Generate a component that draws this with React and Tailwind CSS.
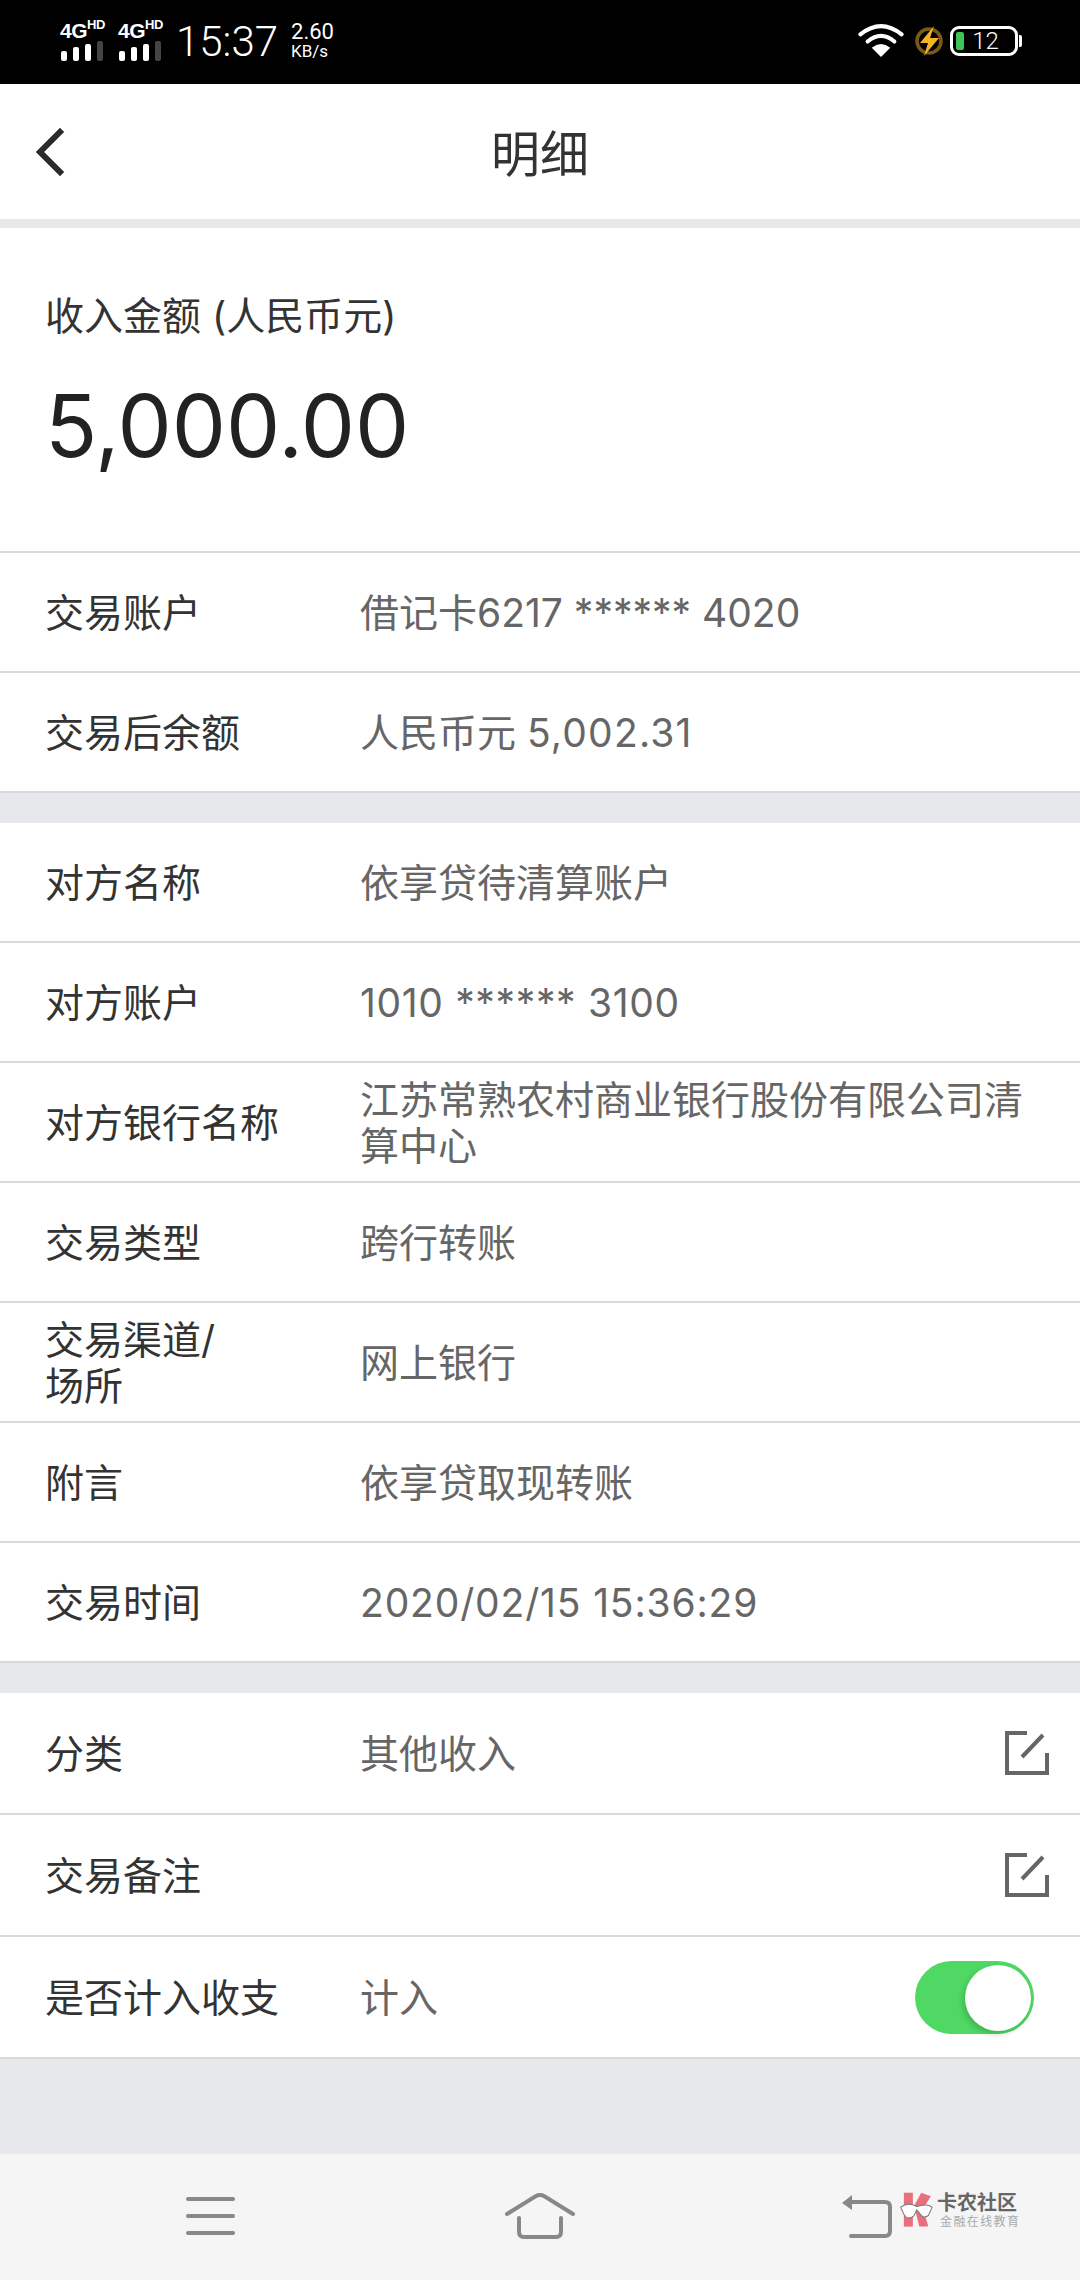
const F = { fontFamily: 'Inter,"Noto Sans CJK SC",sans-serif' };

function Signal() {
  return (
    <div className="flex flex-col w-[46px] text-white">
      <div className="flex items-start h-[24px] font-bold" style={{ fontFamily: '"Liberation Sans",sans-serif' }}>
        <span className="text-[21px] leading-[20px] tracking-[-0.5px] mt-[3px]">4G</span>
        <span className="text-[13px] leading-[12px] tracking-[-0.3px] mt-[1px]">HD</span>
      </div>
      <div className="flex gap-[6px] items-end h-[20px] ml-[1px] -mt-[1px]">
        <div className="w-[6px] h-[10px] bg-white rounded-[2px]" />
        <div className="w-[6px] h-[14px] bg-white rounded-[2px]" />
        <div className="w-[6px] h-[17px] bg-white rounded-[2px]" />
        <div className="w-[6px] h-[20px] bg-[#444] rounded-[2px]" />
      </div>
    </div>
  );
}

function StatusBar() {
  return (
    <div className="h-[84px] bg-black flex items-center text-white relative" style={{ fontFamily: 'Roboto,sans-serif' }}>
      <div className="flex items-center ml-[60px] gap-[12px] -mt-[6px]">
        <Signal />
        <Signal />
      </div>
      <span className="ml-[12px] text-[42px] leading-none font-light">15:37</span>
      <div className="ml-[13px] flex flex-col -mt-[3px]">
        <span className="text-[22px] leading-[21px]">2.60</span>
        <span className="text-[17px] leading-[18px]">KB/s</span>
      </div>
      <div className="ml-auto mr-[58px] flex items-center -mt-[3px]">
        <svg width="48" height="35" viewBox="0 0 46 34" fill="none" stroke="#fff" strokeWidth="4" strokeLinecap="round">
          <path d="M3 11 Q23 -5 43 11" />
          <path d="M10 18 Q23 7 36 18" />
          <path d="M23 33 L14 24 Q23 17 32 24 Z" fill="#fff" stroke="none" />
        </svg>
        <svg className="ml-[9px]" width="30" height="32" viewBox="0 0 30 32" fill="none">
          <circle cx="15" cy="16" r="12" stroke="#7a5a14" strokeWidth="3.5" />
          <path d="M20 1 L6 18 H14 L10 31 L25 13 H16 Z" fill="#f5b324" />
        </svg>
        <div className="ml-[6px] w-[68px] h-[30px] border-[3px] border-white rounded-[9px] relative flex items-center justify-center">
          <div className="absolute left-[3px] top-[3px] bottom-[3px] w-[8px] bg-[#3fc456] rounded-[2px]" />
          <span className="text-[24px] leading-none font-light pl-[3px]">12</span>
        </div>
        <div className="w-[3px] h-[12px] bg-white rounded-r-[2px] ml-[1px]" />
      </div>
    </div>
  );
}

function Row({ label, value, right, tall }) {
  return (
    <div className={`${tall || 'h-[120px]'} bg-white border-b-2 border-[#d9d9db] flex items-center pl-[45px] shrink-0`}>
      <div className="w-[315px] text-[39px] leading-[46px] text-[#333] pr-[60px] pt-[2px] shrink-0">{label}</div>
      <div className="flex-1 text-[39px] leading-[46px] text-[#666] pr-[45px] pt-[2px]">{value}</div>
      {right}
    </div>
  );
}

function EditIcon() {
  return (
    <svg className="mr-[31px] shrink-0" width="44" height="44" viewBox="0 0 44 44" fill="none" stroke="#666" strokeWidth="4">
      <path d="M22 2 H2 V42 H42 V22" />
      <path d="M17 26 L38 4" />
    </svg>
  );
}

function Toggle() {
  return (
    <div className="mr-[46px] w-[119px] h-[73px] rounded-full bg-[#4fd964] relative shrink-0">
      <div className="absolute right-[3px] top-[4px] w-[66px] h-[66px] rounded-full bg-white shadow-[-2px_3px_6px_rgba(0,0,0,0.18)]" />
    </div>
  );
}

function Logo() {
  return (
    <div className="flex items-start absolute left-[900px] top-[38px]">
      <svg width="36" height="36" viewBox="0 0 56 52" preserveAspectRatio="none">
        <path d="M6 1 H20 V50 H6 Z" fill="#e8707c" />
        <path d="M22 20 L33 1 L48 6 L36 24 L44 50 L30 50 Z" fill="#e8707c" />
        <path d="M1 22 Q12 14 26 21 Q42 16 50 22 L44 34 Q36 40 30 30 L26 26 L22 34 Q12 42 6 32 Z" fill="#fff" stroke="#777" strokeWidth="1.5" />
      </svg>
      <div className="flex flex-col ml-[1px] w-[82px]" style={F}>
        <span className="text-[20px] leading-[22px] font-bold text-[#666] whitespace-nowrap">卡农社区</span>
        <span className="text-[12px] leading-[14px] text-[#aaa] tracking-[1.4px] ml-[3px] mt-[1px] whitespace-nowrap">金融在线教育</span>
      </div>
    </div>
  );
}

function BottomBar() {
  return (
    <div className="h-[126px] bg-[#f5f5f6] relative flex items-center shrink-0">
      <div className="ml-[186px] w-[49px] flex flex-col gap-[13px] -mt-[2px]">
        <div className="h-[4px] bg-[#888] rounded" />
        <div className="h-[4px] bg-[#888] rounded" />
        <div className="h-[4px] bg-[#888] rounded" />
      </div>
      <svg className="ml-[270px] -mt-[2px]" width="70" height="46" viewBox="0 0 70 46" fill="none" stroke="#888" strokeWidth="4" strokeLinecap="round">
        <path d="M2 21 L31 3 Q35 1 39 3 L68 21" />
        <path d="M14 25 V39 Q14 44 19 44 H51 Q56 44 56 39 V25" />
      </svg>
      <svg className="ml-[266px] -mt-[2px]" width="52" height="44" viewBox="0 0 52 44" fill="none">
        <path d="M1 9 L11 1 V16 Z" fill="#888" />
        <path d="M9 8 H44 Q49 8 49 13 V37 Q49 42 44 42 H10" stroke="#888" strokeWidth="4" strokeLinecap="round" />
      </svg>
      <Logo />
    </div>
  );
}

export default function App() {
  return (
    <div className="w-[1080px] h-[2280px] bg-[#e7e8ec] flex flex-col overflow-hidden" style={F}>
      <StatusBar />
      <div className="h-[135px] bg-white flex items-center justify-center relative shrink-0">
        <svg className="absolute left-[35px] top-[44px]" width="30" height="48" viewBox="0 0 30 48" fill="none" stroke="#2b2b2b" strokeWidth="6" strokeLinecap="square">
          <path d="M25 4 L5 24 L25 44" />
        </svg>
        <span className="text-[49px] leading-none text-[#333] mt-[6px]">明细</span>
      </div>
      <div className="h-[9px] shrink-0" />
      <div className="h-[325px] bg-white border-b-2 border-[#d9d9db] pl-[45px] pt-[65px] shrink-0">
        <div className="text-[39px] leading-[46px] text-[#333]">收入金额 (人民币元)</div>
        <div className="text-[86px] leading-[100px] text-[#222] mt-[37px]">5,000.00</div>
      </div>
      <Row label="交易账户" value="借记卡6217 ****** 4020" />
      <Row label="交易后余额" value={<>人民币元 <span className="tracking-[1.2px]">5,002.31</span></>} />
      <div className="h-[30px] shrink-0" />
      <Row label="对方名称" value="依享贷待清算账户" />
      <Row label="对方账户" value={<span className="tracking-[0.65px]">1010 ****** 3100</span>} />
      <Row label="对方银行名称" value="江苏常熟农村商业银行股份有限公司清算中心" />
      <Row label="交易类型" value="跨行转账" />
      <Row label={<>交易渠道/<br />场所</>} value="网上银行" />
      <Row label="附言" value="依享贷取现转账" />
      <Row label="交易时间" value={<span className="tracking-[0.85px]">2020/02/15 15:36:29</span>} />
      <div className="h-[30px] shrink-0" />
      <Row tall="h-[122px]" label="分类" value="其他收入" right={<EditIcon />} />
      <Row tall="h-[122px]" label="交易备注" value="" right={<EditIcon />} />
      <Row tall="h-[122px]" label="是否计入收支" value="计入" right={<Toggle />} />
      <div className="flex-1" />
      <BottomBar />
    </div>
  );
}
